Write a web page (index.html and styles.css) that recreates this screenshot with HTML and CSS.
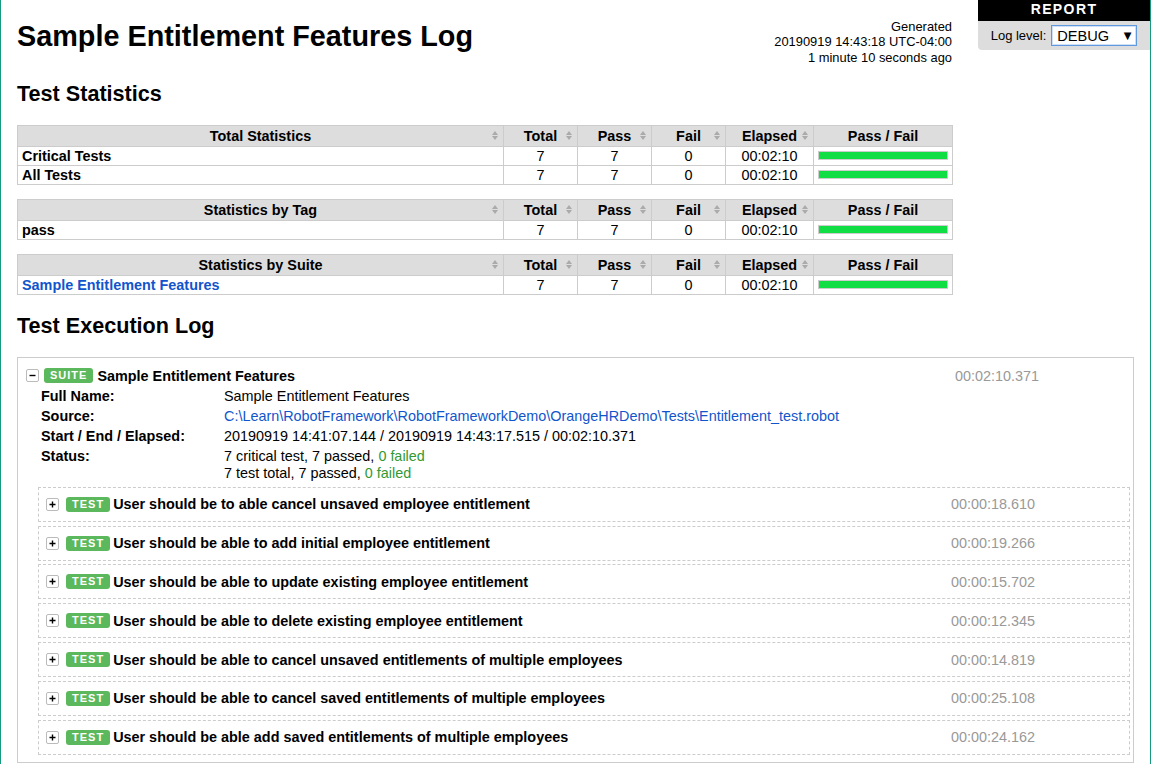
FILE: index.html
```html
<!DOCTYPE html>
<html lang="en">
<head>
<meta charset="utf-8">
<title>Sample Entitlement Features Log</title>
<link rel="stylesheet" href="styles.css">
</head>
<body>
<div class="top-right">
  <div class="report-link">REPORT</div>
  <div class="log-level">
    <span>Log level:</span>
    <span class="select"><span>DEBUG</span><span class="arrow">▼</span></span>
  </div>
</div>

<div class="header">
  <h1 class="title">Sample Entitlement Features Log</h1>
  <div class="generated">Generated<br>20190919 14:43:18 UTC-04:00<br>1 minute 10 seconds ago</div>
</div>

<h2 class="section-title stats-title">Test Statistics</h2>

<table class="stats first">
  <colgroup><col class="c-name"><col class="c-stat"><col class="c-stat"><col class="c-stat"><col class="c-elapsed"><col class="c-graph"></colgroup>
  <thead>
    <tr><th class="sortable">Total Statistics<span class="sort"><i class="up"></i><i class="down"></i></span></th><th class="sortable">Total<span class="sort"><i class="up"></i><i class="down"></i></span></th><th class="sortable">Pass<span class="sort"><i class="up"></i><i class="down"></i></span></th><th class="sortable">Fail<span class="sort"><i class="up"></i><i class="down"></i></span></th><th class="sortable">Elapsed<span class="sort"><i class="up"></i><i class="down"></i></span></th><th>Pass / Fail</th></tr>
  </thead>
  <tbody>
    <tr><td class="stat-name">Critical Tests</td><td class="num">7</td><td class="num">7</td><td class="num">0</td><td class="num">00:02:10</td><td><div class="graph"><div class="pass-bar" style="width:100%"></div></div></td></tr>
    <tr><td class="stat-name">All Tests</td><td class="num">7</td><td class="num">7</td><td class="num">0</td><td class="num">00:02:10</td><td><div class="graph"><div class="pass-bar" style="width:100%"></div></div></td></tr>
  </tbody>
</table>

<table class="stats">
  <colgroup><col class="c-name"><col class="c-stat"><col class="c-stat"><col class="c-stat"><col class="c-elapsed"><col class="c-graph"></colgroup>
  <thead>
    <tr><th class="sortable">Statistics by Tag<span class="sort"><i class="up"></i><i class="down"></i></span></th><th class="sortable">Total<span class="sort"><i class="up"></i><i class="down"></i></span></th><th class="sortable">Pass<span class="sort"><i class="up"></i><i class="down"></i></span></th><th class="sortable">Fail<span class="sort"><i class="up"></i><i class="down"></i></span></th><th class="sortable">Elapsed<span class="sort"><i class="up"></i><i class="down"></i></span></th><th>Pass / Fail</th></tr>
  </thead>
  <tbody>
    <tr><td class="stat-name">pass</td><td class="num">7</td><td class="num">7</td><td class="num">0</td><td class="num">00:02:10</td><td><div class="graph"><div class="pass-bar" style="width:100%"></div></div></td></tr>
  </tbody>
</table>

<table class="stats">
  <colgroup><col class="c-name"><col class="c-stat"><col class="c-stat"><col class="c-stat"><col class="c-elapsed"><col class="c-graph"></colgroup>
  <thead>
    <tr><th class="sortable">Statistics by Suite<span class="sort"><i class="up"></i><i class="down"></i></span></th><th class="sortable">Total<span class="sort"><i class="up"></i><i class="down"></i></span></th><th class="sortable">Pass<span class="sort"><i class="up"></i><i class="down"></i></span></th><th class="sortable">Fail<span class="sort"><i class="up"></i><i class="down"></i></span></th><th class="sortable">Elapsed<span class="sort"><i class="up"></i><i class="down"></i></span></th><th>Pass / Fail</th></tr>
  </thead>
  <tbody>
    <tr><td class="stat-name"><a href="#s1">Sample Entitlement Features</a></td><td class="num">7</td><td class="num">7</td><td class="num">0</td><td class="num">00:02:10</td><td><div class="graph"><div class="pass-bar" style="width:100%"></div></div></td></tr>
  </tbody>
</table>

<h2 class="section-title exec-title">Test Execution Log</h2>

<div class="suite" id="s1">
  <div class="element-head suite-head">
    <span class="toggle"><svg width="11" height="11" viewBox="0 0 11 11"><path d="M2.5 5.5h6" stroke="#000" stroke-width="1.4"/></svg></span>
    <span class="label">SUITE</span>
    <span class="name">Sample Entitlement Features</span>
    <span class="elapsed">00:02:10.371</span>
  </div>
  <div class="meta">
    <div class="meta-key">Full Name:</div><div class="meta-val">Sample Entitlement Features</div>
    <div class="meta-key">Source:</div><div class="meta-val"><a href="#src">C:\Learn\RobotFramework\RobotFrameworkDemo\OrangeHRDemo\Tests\Entitlement_test.robot</a></div>
    <div class="meta-key">Start / End / Elapsed:</div><div class="meta-val">20190919 14:41:07.144 / 20190919 14:43:17.515 / 00:02:10.371</div>
    <div class="meta-key">Status:</div><div class="meta-val">7 critical test, 7 passed, <span class="pass">0 failed</span><br>7 test total, 7 passed, <span class="pass">0 failed</span></div>
  </div>
  <div class="tests">
    <div class="test element-head"><span class="toggle"><svg width="11" height="11" viewBox="0 0 11 11"><path d="M2.5 5.5h6M5.5 2.5v6" stroke="#000" stroke-width="1.4"/></svg></span><span class="label">TEST</span><span class="name">User should be to able cancel unsaved employee entitlement</span><span class="elapsed">00:00:18.610</span></div>
    <div class="test element-head"><span class="toggle"><svg width="11" height="11" viewBox="0 0 11 11"><path d="M2.5 5.5h6M5.5 2.5v6" stroke="#000" stroke-width="1.4"/></svg></span><span class="label">TEST</span><span class="name">User should be able to add initial employee entitlement</span><span class="elapsed">00:00:19.266</span></div>
    <div class="test element-head"><span class="toggle"><svg width="11" height="11" viewBox="0 0 11 11"><path d="M2.5 5.5h6M5.5 2.5v6" stroke="#000" stroke-width="1.4"/></svg></span><span class="label">TEST</span><span class="name">User should be able to update existing employee entitlement</span><span class="elapsed">00:00:15.702</span></div>
    <div class="test element-head"><span class="toggle"><svg width="11" height="11" viewBox="0 0 11 11"><path d="M2.5 5.5h6M5.5 2.5v6" stroke="#000" stroke-width="1.4"/></svg></span><span class="label">TEST</span><span class="name">User should be able to delete existing employee entitlement</span><span class="elapsed">00:00:12.345</span></div>
    <div class="test element-head"><span class="toggle"><svg width="11" height="11" viewBox="0 0 11 11"><path d="M2.5 5.5h6M5.5 2.5v6" stroke="#000" stroke-width="1.4"/></svg></span><span class="label">TEST</span><span class="name">User should be able to cancel unsaved entitlements of multiple employees</span><span class="elapsed">00:00:14.819</span></div>
    <div class="test element-head"><span class="toggle"><svg width="11" height="11" viewBox="0 0 11 11"><path d="M2.5 5.5h6M5.5 2.5v6" stroke="#000" stroke-width="1.4"/></svg></span><span class="label">TEST</span><span class="name">User should be able to cancel saved entitlements of multiple employees</span><span class="elapsed">00:00:25.108</span></div>
    <div class="test element-head"><span class="toggle"><svg width="11" height="11" viewBox="0 0 11 11"><path d="M2.5 5.5h6M5.5 2.5v6" stroke="#000" stroke-width="1.4"/></svg></span><span class="label">TEST</span><span class="name">User should be able add saved entitlements of multiple employees</span><span class="elapsed">00:00:24.162</span></div>
  </div>
</div>
</body>
</html>
```
FILE: styles.css
```css
html {
  margin: 0;
  padding: 0;
}
body {
  margin: 0;
  min-height: 100vh;
  box-sizing: border-box;
  border-left: 1px solid #169a7e;
  border-right: 1px solid #169a7e;
  padding: 0 16px 8px;
  font-family: "Liberation Sans", Arial, Helvetica, sans-serif;
  font-size: 14.4px;
  color: #000;
  background: #fff;
  position: relative;
}
a {
  color: #15c;
  text-decoration: none;
}

/* top right */
.top-right {
  position: absolute;
  top: 0;
  right: 0;
  width: 172px;
  text-align: center;
}
.report-link {
  background: #000;
  color: #fff;
  font-weight: bold;
  font-size: 14px;
  letter-spacing: 0.1em;
  height: 21px;
  line-height: 19px;
  box-sizing: border-box;
}
.log-level {
  background: #ddd;
  height: 29px;
  border-bottom-left-radius: 4px;
  display: flex;
  align-items: center;
  justify-content: center;
  gap: 5px;
  font-size: 13px;
}
.select {
  display: flex;
  align-items: center;
  width: 86px;
  height: 21px;
  box-sizing: border-box;
  background: #fff;
  border: 1px solid #5f9ae0;
  box-shadow: inset 0 0 0 1px #cfe0f6;
  padding: 0 5px 0 5px;
  font-size: 14.6px;
}
.select .arrow {
  margin-left: auto;
  font-family: "DejaVu Sans", sans-serif;
  font-size: 10px;
}

/* header */
.header {
  display: flex;
  justify-content: space-between;
  align-items: flex-start;
  width: 935px;
  padding-top: 19px;
}
.title {
  margin: 1px 0 0 0;
  font-size: 28.8px;
  line-height: 32px;
  font-weight: bold;
}
.generated {
  text-align: right;
  font-size: 12.9px;
  line-height: 15.3px;
  white-space: nowrap;
}
.section-title {
  margin: 0;
  font-size: 21.6px;
  line-height: 24px;
  font-weight: bold;
}
.stats-title {
  margin-top: 17px;
}
.exec-title {
  margin-top: 19.5px;
}

/* statistics tables */
.stats {
  width: 935px;
  table-layout: fixed;
  border-collapse: collapse;
  margin-top: 14px;
  font-size: 14.4px;
}
.stats.first {
  margin-top: 19px;
}
.c-name { width: 486px; }
.c-stat { width: 74px; }
.c-elapsed { width: 88px; }
.c-graph { width: 139px; }
.stats th,
.stats td {
  border: 1px solid #ccc;
  padding: 1px 4px;
  line-height: 16px;
  vertical-align: middle;
}
.stats th {
  background: #ddd;
  padding: 2px 4px;
  font-weight: bold;
  text-align: center;
  position: relative;
}
.stats td.num {
  text-align: center;
  white-space: nowrap;
}
.stat-name {
  font-weight: bold;
  text-align: left;
}
.sort {
  position: absolute;
  right: 4px;
  top: 50%;
  margin-top: -5px;
  width: 7px;
  height: 9px;
  display: flex;
  flex-direction: column;
  justify-content: space-between;
}
.sort i {
  display: block;
  width: 0;
  height: 0;
  border-left: 3.5px solid transparent;
  border-right: 3.5px solid transparent;
}
.sort .up {
  border-bottom: 4px solid #aaa;
}
.sort .down {
  border-top: 4px solid #aaa;
}
.graph {
  border: 1px solid #ccc;
  height: 7px;
  background: #f33;
}
.pass-bar {
  height: 100%;
  background: #1d4;
}

/* execution log */
.suite {
  margin-top: 18.5px;
  border: 1px solid #ccc;
  padding: 0 0 7px 0;
}
.element-head {
  display: flex;
  align-items: center;
  white-space: nowrap;
}
.suite-head {
  margin-top: 8px;
  height: 20px;
  padding-left: 8px;
}
.toggle {
  width: 13px;
  height: 13px;
  box-sizing: border-box;
  border: 1px solid #bbb;
  border-radius: 2px;
  background: #fff;
  display: flex;
  align-items: center;
  justify-content: center;
  flex: none;
}
.toggle svg {
  display: block;
}
.label {
  margin-left: 5px;
  height: 15px;
  line-height: 15px;
  padding: 0 6px;
  border-radius: 3px;
  background: #5cb85c;
  color: #fff;
  font-size: 11px;
  font-weight: bold;
  letter-spacing: 1px;
}
.name {
  margin-left: 4px;
  font-weight: bold;
}
.elapsed {
  margin-left: auto;
  padding-right: 94px;
  color: #999;
}
.meta {
  margin: 1px 0 0 23px;
  display: grid;
  grid-template-columns: 183px 1fr;
  line-height: 17px;
}
.meta-key,
.meta-val {
  padding: 1.5px 0;
}
.meta-key {
  font-weight: bold;
}
.pass {
  color: #393;
}
.tests {
  margin: 3px 3px 0 20px;
  display: flex;
  flex-direction: column;
  gap: 3.8px;
}
.test {
  height: 35px;
  box-sizing: border-box;
  border: 1px dashed #ccc;
  padding-left: 7px;
}
.test .label {
  margin-left: 7px;
}
.test .name {
  margin-left: 3px;
}
```
